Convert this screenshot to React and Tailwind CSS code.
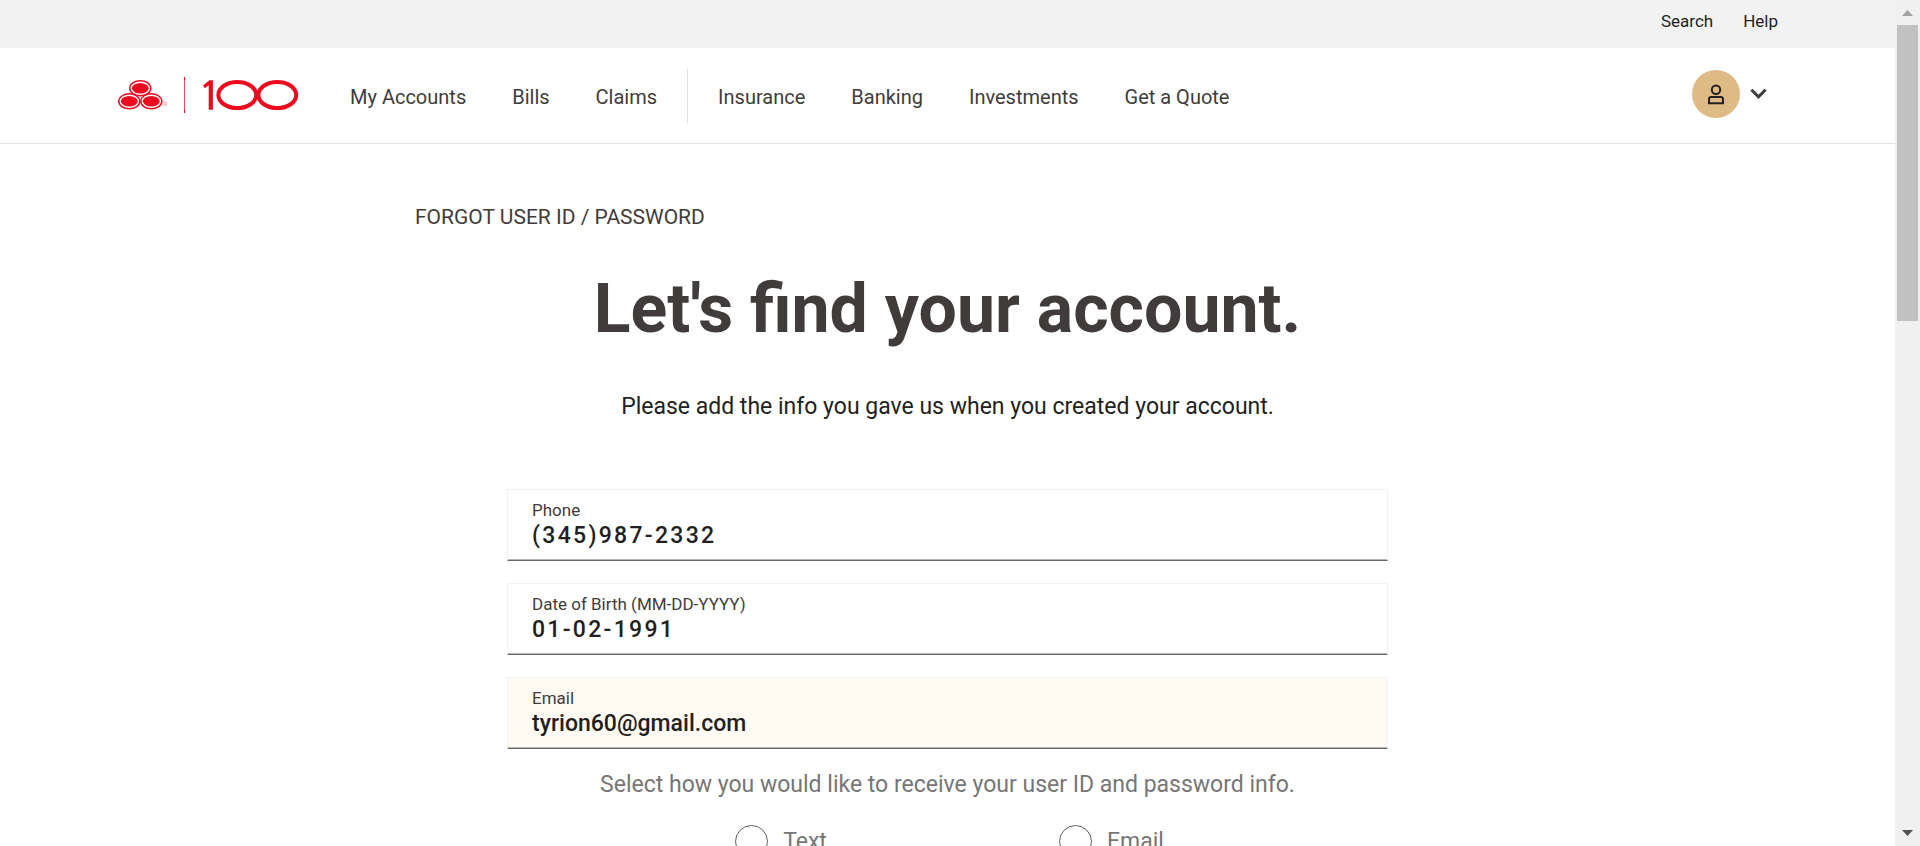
import React from "react";

const accountLinks = ["My Accounts", "Bills", "Claims"];
const productLinks = ["Insurance", "Banking", "Investments", "Get a Quote"];

function Emblem({ cx, cy }) {
  return (
    <g>
      <ellipse cx={cx} cy={cy} rx="10.5" ry="7.5" fill="#fff" stroke="#eb0a1e" strokeWidth="1.5" />
      <ellipse cx={cx} cy={cy} rx="8.4" ry="5.3" fill="#eb0a1e" />
    </g>
  );
}

function Logo() {
  return (
    <svg width="182" height="40" viewBox="0 -2 182 40" aria-hidden="true">
      <Emblem cx={23.3} cy={12.2} />
      <Emblem cx={12.3} cy={25.3} />
      <Emblem cx={34.3} cy={25.3} />
      <circle cx="47.8" cy="27.8" r="1.9" fill="none" stroke="#f59aa3" strokeWidth="0.7" />
      <path d="M47.2 29v-2.4h.7a.6.6 0 0 1 0 1.3h-.7m.7 0 .6 1.1" fill="none" stroke="#f59aa3" strokeWidth="0.5" />
      <rect x="67" y="1" width="1" height="36" fill="#f0505e" />
      <rect x="67" y="1" width="1" height="3" fill="#eb0a1e" />
      <rect x="67" y="34" width="1" height="3" fill="#eb0a1e" />
      <path d="M86 9.6 92.4 4.2H95.9V33.8H91.7V9.2L87.8 12.2Z" fill="#eb0a1e" />
      <ellipse cx="120.3" cy="19" rx="18.9" ry="13.1" fill="none" stroke="#eb0a1e" strokeWidth="4" />
      <ellipse cx="160.3" cy="19" rx="18.9" ry="13.1" fill="none" stroke="#eb0a1e" strokeWidth="4" />
    </svg>
  );
}

function NavList({ items }) {
  return (
    <ul className="flex items-center gap-[46px] pt-0.5">
      {items.map((item) => (
        <li key={item}>
          <a href="#">{item}</a>
        </li>
      ))}
    </ul>
  );
}

function Header() {
  return (
    <header>
      <div className="flex h-12 justify-end gap-[30px] bg-[#f2f2f2] pt-[11px] pr-[117px] text-[17px] leading-5 text-[#231f20]">
        <a href="#">Search</a>
        <a href="#">Help</a>
      </div>
      <div className="flex h-24 items-center border-b border-[#e2e2e2] pr-32 pb-[3px] pl-[117px]">
        <a href="#" aria-label="Home">
          <Logo />
        </a>
        <nav className="ml-[51px] flex items-center pt-1 text-xl text-[#403c3b]">
          <NavList items={accountLinks} />
          <div className="mx-[30px] h-[54px] w-px bg-[#e2e2e2]" />
          <NavList items={productLinks} />
        </nav>
        <button type="button" aria-label="Account menu" className="ml-auto flex items-center gap-[10px]">
          <span className="flex size-12 items-center justify-center rounded-full bg-[#debb85]">
            <svg width="24" height="24" viewBox="0 0 24 24" fill="none" stroke="#231f20" strokeWidth="2" aria-hidden="true">
              <circle cx="12" cy="7.8" r="4.2" />
              <path d="M5 21.2V17.4Q5 15 7.4 15H16.6Q19 15 19 17.4V21.2Z" />
            </svg>
          </span>
          <svg width="17" height="12" viewBox="0 0 17 12" fill="none" stroke="#403c3b" strokeWidth="3" aria-hidden="true">
            <path d="M1.4 1.8 8.5 8.8 15.6 1.8" />
          </svg>
        </button>
      </div>
    </header>
  );
}

function Field({ id, label, value, type, boxClass, inputClass }) {
  return (
    <div className={`border border-[#f2f2f2] border-b-[#6e6969] px-6 py-[10px] shadow-[inset_0_-1px_0_#b8b6b6] ${boxClass}`}>
      <label htmlFor={id} className="block text-[17px] leading-5 text-[#403c3b]">
        {label}
      </label>
      <input
        id={id}
        type={type}
        defaultValue={value}
        className={`mt-0.5 block h-7 w-full bg-transparent text-[23px] font-medium text-[#231f20] outline-none ${inputClass}`}
      />
    </div>
  );
}

function Choice({ label }) {
  return (
    <label className="flex items-center gap-[15px]">
      <input type="radio" name="delivery" className="size-[33px] appearance-none rounded-full border border-[#5e5e5e]" />
      {label}
    </label>
  );
}

function ScrollTrack() {
  return (
    <div aria-hidden="true" className="flex w-[25px] shrink-0 flex-col items-center bg-[#f0f0f0]">
      <svg width="11" height="25" viewBox="0 0 11 25" className="shrink-0">
        <path d="M0 16 5.5 10 11 16Z" fill="#a3a3a3" />
      </svg>
      <div className="flex w-full flex-1 flex-col px-0.5">
        <div className="h-[37%] bg-[#c1c1c1]" />
      </div>
      <svg width="11" height="20" viewBox="0 0 11 20" className="shrink-0">
        <path d="M0 4 5.5 10 11 4Z" fill="#505050" />
      </svg>
    </div>
  );
}

export default function App() {
  return (
    <div className="flex h-screen bg-white font-['Roboto',sans-serif]">
      <div className="min-w-0 flex-1 overflow-hidden">
        <Header />
        <main className="mx-auto max-w-[1065px] pt-[59px]">
          <p className="text-[21px] leading-7 text-[#403c3b]">FORGOT USER ID / PASSWORD</p>
          <h1 className="mt-[38px] text-center text-[68px] leading-[80px] font-bold text-[#403c3b]">
            Let's find your account.
          </h1>
          <p className="mt-[42px] text-center text-[23px] leading-8 text-[#231f20]">
            Please add the info you gave us when you created your account.
          </p>
          <form className="mx-auto mt-[66px] max-w-[881px]">
            <div className="flex flex-col gap-[22px]">
              <Field id="phone" label="Phone" type="tel" value="(345)987-2332" boxClass="bg-white" inputClass="tracking-widest" />
              <Field id="dob" label="Date of Birth (MM-DD-YYYY)" type="text" value="01-02-1991" boxClass="bg-white" inputClass="tracking-widest" />
              <Field id="email" label="Email" type="email" value="tyrion60@gmail.com" boxClass="bg-[#fffaf2]" inputClass="tracking-normal" />
            </div>
            <fieldset className="mt-5 text-[23px] leading-8 text-[#767676]">
              <legend className="w-full text-center">
                Select how you would like to receive your user ID and password info.
              </legend>
              <div className="mt-6 flex justify-center gap-[232px] pl-1">
                <Choice label="Text" />
                <Choice label="Email" />
              </div>
            </fieldset>
          </form>
        </main>
      </div>
      <ScrollTrack />
    </div>
  );
}
